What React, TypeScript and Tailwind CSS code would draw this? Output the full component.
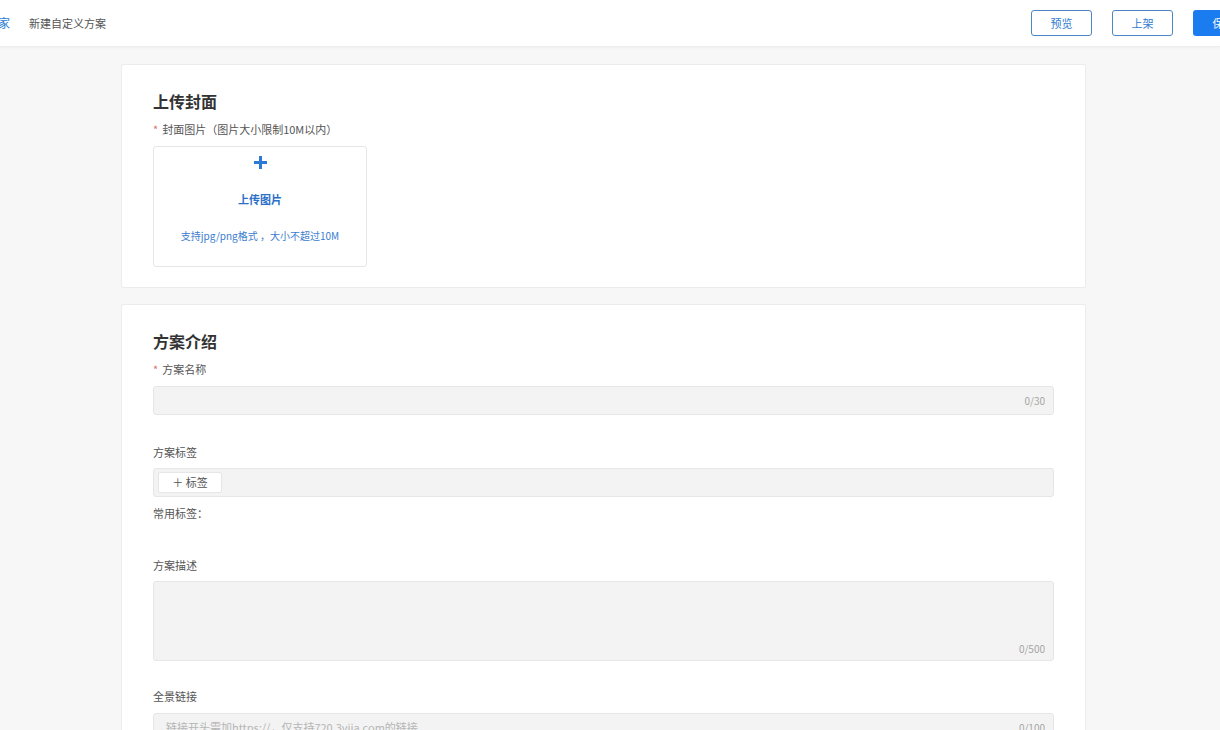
import React from 'react';

const font = { fontFamily: '"Noto Sans CJK SC", "Noto Sans", sans-serif' };

function Label({ text, required = false }: { text: string; required?: boolean }) {
  return (
    <div className="text-[11px] leading-[16px] text-[#555]">
      {required && <span className="text-[#e06c6c] mr-1">*</span>}
      {text}
    </div>
  );
}

function Counter({ text }: { text: string }) {
  return <span className="text-[10px] text-[#a5a5a5]">{text}</span>;
}

export default function App() {
  return (
    <div className="w-[1220px] h-[730px] overflow-hidden bg-[#f7f7f7] flex flex-col" style={font}>
      {/* 顶部栏 */}
      <header className="h-[47px] shrink-0 bg-white border-b border-[#ececec] shadow-[0_1px_3px_rgba(0,0,0,0.04)] flex items-center overflow-hidden">
        <span className="text-[12px] text-[#2a7ad6] ml-[-2px]">家</span>
        <span className="text-[11px] text-[#555] ml-[19px]">新建自定义方案</span>
        <div className="ml-auto flex items-center gap-[20px] mr-[-34px]">
          <button className="w-[61px] h-[26px] rounded-[3px] border border-[#4d86c4] text-[11px] text-[#2f7bd2] bg-white">
            预览
          </button>
          <button className="w-[61px] h-[26px] rounded-[3px] border border-[#4d86c4] text-[11px] text-[#2f7bd2] bg-white">
            上架
          </button>
          <button className="w-[61px] h-[26px] rounded-[3px] bg-[#1b7cf0] text-[11px] text-white">
            保存
          </button>
        </div>
      </header>

      <main className="flex flex-col gap-[16px] pt-[17px] pl-[121px]">
        {/* 上传封面 */}
        <section className="w-[965px] bg-white border border-[#ececec] rounded-[2px] px-[31px] pt-[25px] pb-[20px]">
          <h2 className="text-[16px] leading-[22px] font-bold text-[#333]">上传封面</h2>
          <div className="mt-[9px]">
            <Label text="封面图片（图片大小限制10M以内）" required />
          </div>
          <div className="mt-[9px] w-[214px] h-[121px] border border-[#e6e6e6] rounded-[3px] flex flex-col items-center">
            <svg className="mt-[9px]" width="13" height="13" viewBox="0 0 13 13">
              <rect x="5" y="0" width="3" height="13" fill="#2a7ad6" />
              <rect x="0" y="5" width="13" height="3" fill="#2a7ad6" />
            </svg>
            <div className="mt-[22px] text-[11px] font-bold text-[#2a70c8]">上传图片</div>
            <div className="mt-[20px] text-[10px] text-[#3a7dd0]">支持jpg/png格式 ，大小不超过10M</div>
          </div>
        </section>

        {/* 方案介绍 */}
        <section className="w-[965px] bg-white border border-[#ececec] rounded-[2px] px-[31px] pt-[25px] pb-[20px]">
          <h2 className="text-[16px] leading-[22px] font-bold text-[#333]">方案介绍</h2>
          <div className="mt-[9px]">
            <Label text="方案名称" required />
          </div>
          <div className="mt-[9px] w-[901px] h-[29px] bg-[#f3f3f3] border border-[#e6e6e6] rounded-[3px] flex items-center justify-end pr-[8px]">
            <Counter text="0/30" />
          </div>

          <div className="mt-[29px]">
            <Label text="方案标签" />
          </div>
          <div className="mt-[8px] w-[901px] h-[29px] bg-[#f3f3f3] border border-[#e6e6e6] rounded-[3px] flex items-center pl-[4px]">
            <button className="w-[64px] h-[21px] bg-white border border-[#e6e6e6] rounded-[2px] text-[11px] text-[#555]">
              ＋ 标签
            </button>
          </div>
          <div className="mt-[8px]">
            <Label text="常用标签：" />
          </div>

          <div className="mt-[36px]">
            <Label text="方案描述" />
          </div>
          <div className="mt-[8px] w-[901px] h-[80px] bg-[#f3f3f3] border border-[#e6e6e6] rounded-[3px] flex items-end justify-end pr-[8px] pb-[4px]">
            <Counter text="0/500" />
          </div>

          <div className="mt-[27px]">
            <Label text="全景链接" />
          </div>
          <div className="mt-[9px] w-[901px] h-[29px] bg-[#f3f3f3] border border-[#e6e6e6] rounded-[3px] flex items-center justify-between px-[12px] pr-[8px]">
            <span className="text-[11px] text-[#b5b5b5]">链接开头需加https://，仅支持720.3vjia.com的链接</span>
            <Counter text="0/100" />
          </div>
        </section>
      </main>
    </div>
  );
}
